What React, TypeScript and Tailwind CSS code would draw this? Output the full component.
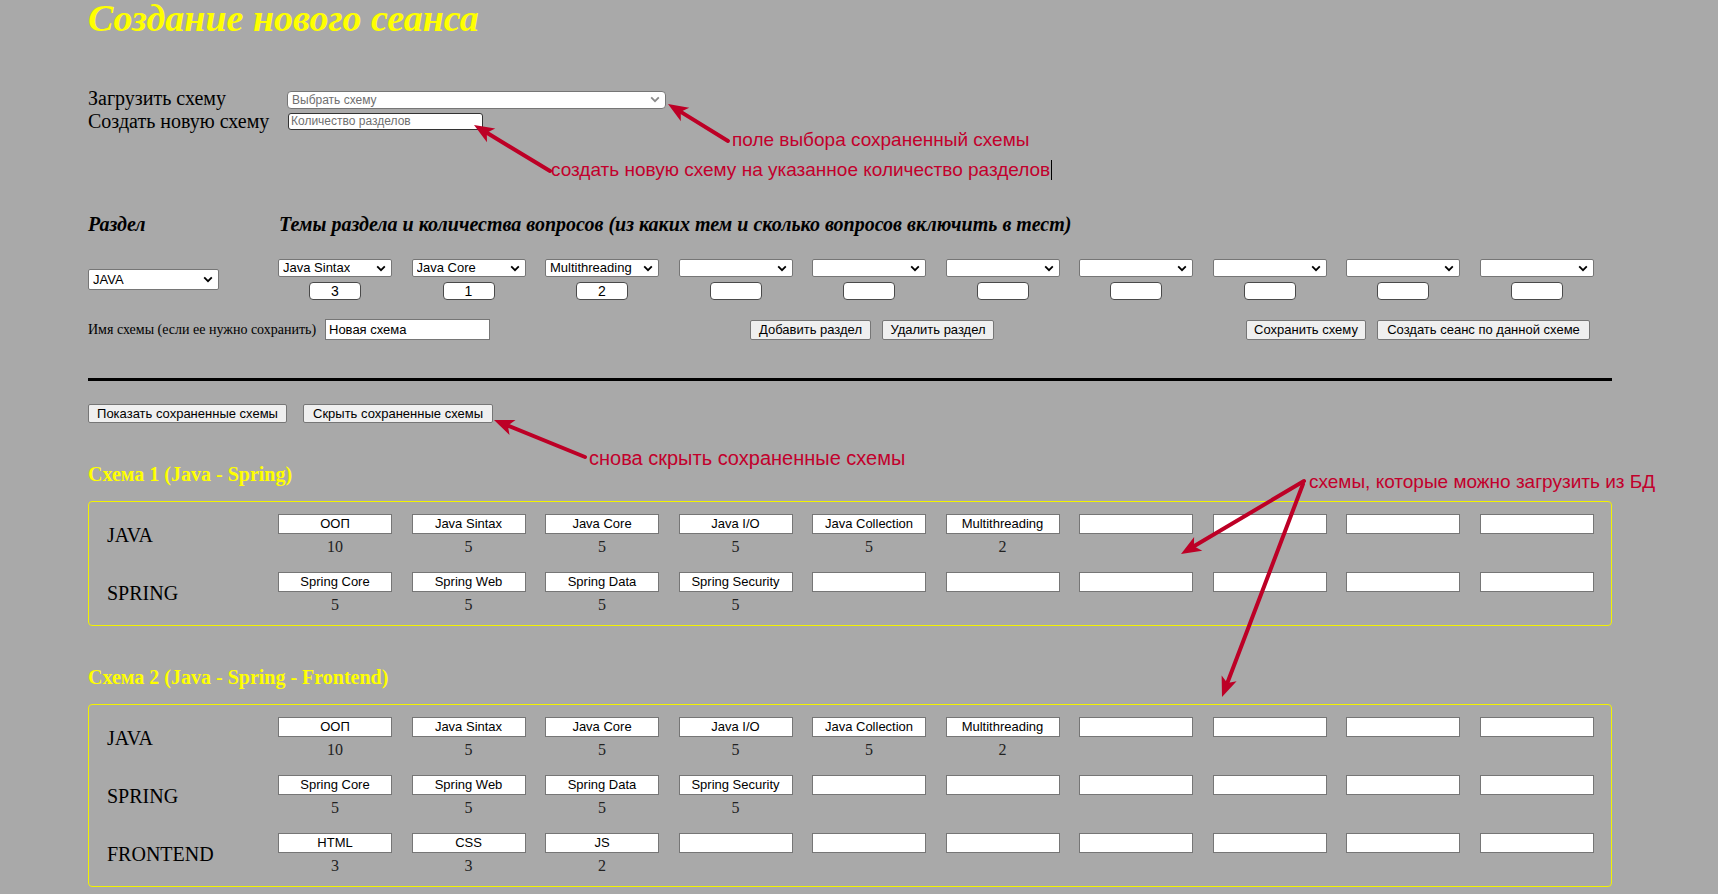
import type { ReactNode } from 'react';

type Topic = [string, string];
type Row = { name: string; topics: Topic[] };

const SCHEMA_1: Row[] = [
  {
    name: 'JAVA',
    topics: [
      ['ООП', '10'],
      ['Java Sintax', '5'],
      ['Java Core', '5'],
      ['Java I/O', '5'],
      ['Java Collection', '5'],
      ['Multithreading', '2'],
    ],
  },
  {
    name: 'SPRING',
    topics: [
      ['Spring Core', '5'],
      ['Spring Web', '5'],
      ['Spring Data', '5'],
      ['Spring Security', '5'],
    ],
  },
];

const SCHEMA_2: Row[] = [
  ...SCHEMA_1,
  {
    name: 'FRONTEND',
    topics: [
      ['HTML', '3'],
      ['CSS', '3'],
      ['JS', '2'],
    ],
  },
];

const EDIT_TOPICS: Topic[] = [
  ['Java Sintax', '3'],
  ['Java Core', '1'],
  ['Multithreading', '2'],
];

const COLS = 10;

function pad(topics: Topic[]): Topic[] {
  const out = [...topics];
  while (out.length < COLS) out.push(['', '']);
  return out;
}

function Chevron({ color = '#000' }: { color?: string }) {
  return (
    <svg width="10" height="7" viewBox="0 0 10 7" className="shrink-0">
      <path d="M1.2 1.4 5 5.2 8.8 1.4" fill="none" stroke={color} strokeWidth="1.8" />
    </svg>
  );
}

function FakeSelect({ value, className }: { value: string; className: string }) {
  return (
    <div
      className={
        'flex items-center justify-between bg-white border border-[#767676] rounded-[2px] pl-[4px] pr-[5px] text-[13px] text-black font-["Liberation_Sans",sans-serif] ' +
        className
      }
    >
      <span className="truncate">{value}</span>
      <Chevron />
    </div>
  );
}

function Btn({ children, className }: { children: ReactNode; className: string }) {
  return (
    <div
      className={
        'flex items-center justify-center bg-[#efefef] border border-[#767676] rounded-[2px] text-[13px] text-black font-["Liberation_Sans",sans-serif] whitespace-nowrap ' +
        className
      }
    >
      {children}
    </div>
  );
}

function SchemaBox({ title, rows }: { title: string; rows: Row[] }) {
  return (
    <>
      <div className="mt-[40px] h-[22px] leading-[22px] text-[20px] font-bold text-[#ffff00]">{title}</div>
      <div className="mt-[16px] border border-[#f2f200] rounded-[4px] pt-[12px] pb-[12px] pl-[18px] flex flex-col gap-[17px]">
        {rows.map((row) => (
          <div key={row.name} className="flex items-center">
            <div className="w-[171px] text-[20px] text-black">{row.name}</div>
            <div className="grid grid-cols-[repeat(10,114px)] gap-x-[19.5px]">
              {pad(row.topics).map(([t, n], i) => (
                <div key={i} className="flex flex-col items-center">
                  <div className="w-[114px] h-[20px] bg-white border border-[#767676] flex items-center justify-center text-[13px] text-black font-['Liberation_Sans',sans-serif]">
                    {t}
                  </div>
                  <div className="mt-[4px] h-[17px] leading-[17px] text-[16px] text-[#222]">{n}</div>
                </div>
              ))}
            </div>
          </div>
        ))}
      </div>
    </>
  );
}

type Arrow = [number, number, number, number];

const ARROWS: Arrow[] = [
  [728, 141, 668, 104],
  [550, 171, 474, 125],
  [585, 457, 494, 420],
  [1304, 481, 1181, 554],
  [1303, 484, 1222, 697],
];

function ArrowShape({ a }: { a: Arrow }) {
  const [x1, y1, x2, y2] = a;
  const dx = x2 - x1;
  const dy = y2 - y1;
  const len = Math.hypot(dx, dy);
  const ux = dx / len;
  const uy = dy / len;
  const nx = -uy;
  const ny = ux;
  const head = 20;
  const half = 8;
  const bx = x2 - ux * head;
  const by = y2 - uy * head;
  const nbx = x2 - ux * (head - 5);
  const nby = y2 - uy * (head - 5);
  const pts = [
    `${x2},${y2}`,
    `${bx + nx * half},${by + ny * half}`,
    `${nbx},${nby}`,
    `${bx - nx * half},${by - ny * half}`,
  ].join(' ');
  return (
    <g>
      <line x1={x1} y1={y1} x2={nbx} y2={nby} stroke="#bd0026" strokeWidth="4" strokeLinecap="round" />
      <polygon points={pts} fill="#bd0026" />
    </g>
  );
}

const NOTE = "absolute leading-[22px] text-[#c2002c] font-['Liberation_Sans',sans-serif] whitespace-nowrap";

export default function App() {
  return (
    <div className="relative min-h-[894px] h-[894px] overflow-hidden bg-[#a9a9a9] font-['Liberation_Serif',serif] text-black">
      <div className="w-[1612px] pl-[88px]">
        <h1 className="h-[36px] leading-[36px] text-[38px] font-bold italic text-[#ffff00]">
          Создание нового сеанса
        </h1>

        <div className="mt-[53px] flex items-center h-[21px]">
          <div className="w-[199px] text-[20px] leading-[21px] -mt-[2px] whitespace-nowrap">Загрузить схему</div>
          <div className="w-[379px] h-[18px] bg-white border border-[#767676] rounded-[4px] flex items-center justify-between pl-[4px] pr-[5px] text-[12px] text-[#6f6f6f] font-['Liberation_Sans',sans-serif]">
            <span>Выбрать схему</span>
            <Chevron color="#8a8a8a" />
          </div>
        </div>
        <div className="flex items-center h-[22px]">
          <div className="w-[200px] text-[20px] leading-[21px] whitespace-nowrap">Создать новую схему</div>
          <div className="w-[195px] h-[17px] bg-white border border-[#333] rounded-[3px] flex items-center pl-[2px] text-[12px] text-[#6f6f6f] font-['Liberation_Sans',sans-serif]">
            Количество разделов
          </div>
        </div>

        <div className="mt-[80px] flex items-center h-[24px] text-[20px] font-bold italic whitespace-nowrap">
          <div className="w-[191px]">Раздел</div>
          <div>Темы раздела и количества вопросов (из каких тем и сколько вопросов включить в тест)</div>
        </div>

        <div className="mt-[23px] flex items-center">
          <div className="w-[190px]">
            <FakeSelect value="JAVA" className="w-[131px] h-[21px]" />
          </div>
          <div className="grid grid-cols-[repeat(10,114px)] gap-x-[19.5px]">
            {pad(EDIT_TOPICS).map(([t, n], i) => (
              <div key={i} className="flex flex-col items-center">
                <FakeSelect value={t} className="w-[114px] h-[18px]" />
                <div className="mt-[5px] w-[52px] h-[18px] bg-white border border-[#4a4a4a] rounded-[4px] flex items-center justify-center text-[14px] font-['Liberation_Sans',sans-serif]">
                  {n}
                </div>
              </div>
            ))}
          </div>
        </div>

        <div className="mt-[19px] flex items-center h-[21px]">
          <div className="w-[237px] text-[14px] whitespace-nowrap">Имя схемы (если ее нужно сохранить)</div>
          <div className="w-[165px] h-[21px] bg-white border border-[#767676] flex items-center pl-[3px] text-[13px] font-['Liberation_Sans',sans-serif]">
            Новая схема
          </div>
          <Btn className="ml-[260px] w-[121px] h-[20px]">Добавить раздел</Btn>
          <Btn className="ml-[11px] w-[112px] h-[20px]">Удалить раздел</Btn>
          <Btn className="ml-auto w-[120px] h-[20px]">Сохранить схему</Btn>
          <Btn className="ml-[11px] mr-[22px] w-[213px] h-[20px]">Создать сеанс по данной схеме</Btn>
        </div>

        <div className="mt-[38px] h-[3px] bg-black" />

        <div className="mt-[23px] flex items-center gap-[16px]">
          <Btn className="w-[199px] h-[19px]">Показать сохраненные схемы</Btn>
          <Btn className="w-[190px] h-[19px]">Скрыть сохраненные схемы</Btn>
        </div>

        <SchemaBox title="Схема 1 (Java - Spring)" rows={SCHEMA_1} />
        <SchemaBox title="Схема 2 (Java - Spring - Frontend)" rows={SCHEMA_2} />
      </div>

      <svg className="absolute inset-0 pointer-events-none" width="1718" height="894" viewBox="0 0 1718 894">
        {ARROWS.map((a, i) => (
          <ArrowShape key={i} a={a} />
        ))}
      </svg>

      <div className={NOTE + ' left-[732px] top-[129px] text-[19px]'}>поле выбора сохраненный схемы</div>
      <div className={NOTE + ' left-[551px] top-[159px] text-[19px] flex items-center'}>
        создать новую схему на указанное количество разделов
        <span className="ml-[1px] inline-block w-[1px] h-[20px] bg-black" />
      </div>
      <div className={NOTE + ' left-[589px] top-[447px] text-[20px]'}>снова скрыть сохраненные схемы</div>
      <div className={NOTE + ' left-[1309px] top-[471px] text-[19px]'}>схемы, которые можно загрузить из БД</div>
    </div>
  );
}
